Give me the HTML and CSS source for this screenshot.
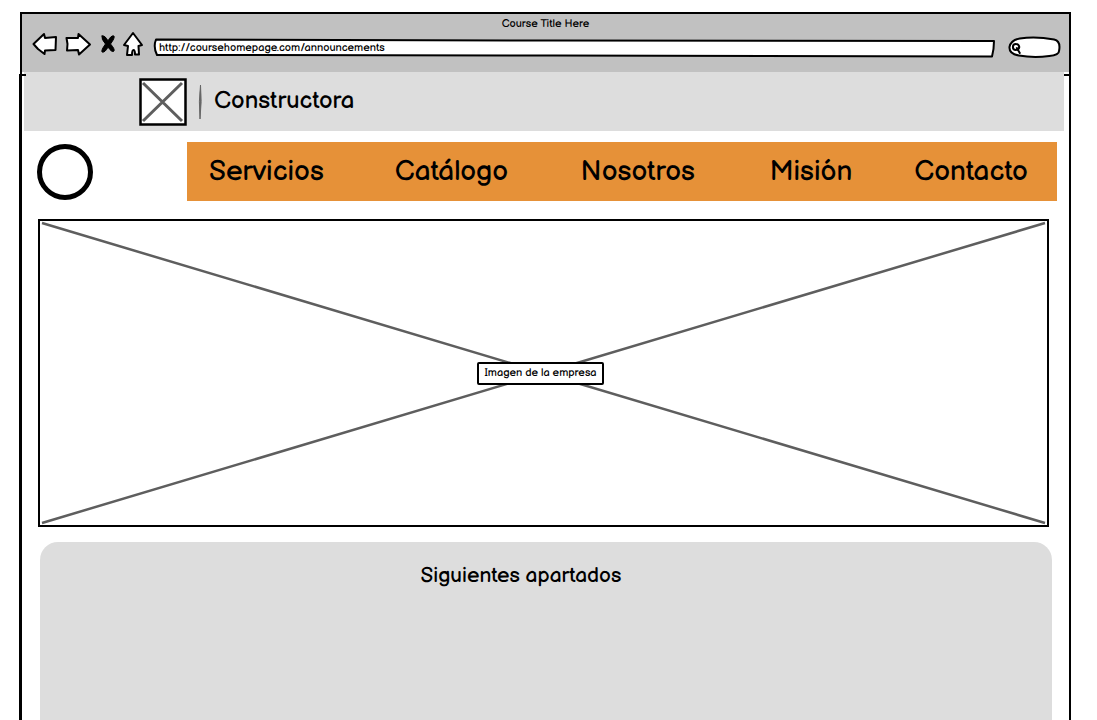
FILE: index.html
```html
<!DOCTYPE html>
<html lang="es">
<head>
<meta charset="utf-8">
<title>Constructora</title>
<link rel="stylesheet" href="styles.css">
</head>
<body>
<div class="browser">
  <div class="chrome">
    <div class="chrome-title">Course Title Here</div>
    <div class="toolbar">
      <button class="tool tool-back" aria-label="Back"><svg width="26" height="24" viewBox="0 0 26 24"><path d="M1.500 11 12 1 13 5 24 4 23.500 17 13 17.500 12.500 21 6 16Z"/></svg></button>
      <button class="tool tool-forward" aria-label="Forward"><svg width="26" height="24" viewBox="0 0 26 24"><path d="M1.500 5 13 5 13.500 1 25 11.500 14 21.500 13 17 2 17.500 2.500 11Z"/></svg></button>
      <button class="tool tool-stop" aria-label="Stop"><svg width="16" height="20" viewBox="0 0 16 20"><path class="solid" d="M2 1Q5 0 8 6Q11 0 14 1Q15 3 10.500 9Q15 14 14 16Q12 18 8 12Q5 18 2 17Q1 15 5.500 9Q1 4 2 1Z"/></svg></button>
      <button class="tool tool-home" aria-label="Home"><svg width="20" height="26" viewBox="0 0 20 26"><path d="M10 1 19 13 15.500 14 16 22.500 12 22.500Q12 18 10.500 18T9 23L4 23 5 14 1 13Z"/></svg></button>
      <div class="address">
        <svg class="outline" viewBox="0 0 842 20" preserveAspectRatio="none" aria-hidden="true"><path d="M2 1.500 400 2.500 841 3Q841 11 839 18.500L400 17.500 3 17Q-1 9 2 1.500Z"/></svg>
        <input class="address-input" type="text" aria-label="Address" value="http://coursehomepage.com/announcements">
      </div>
      <div class="search">
        <svg class="outline" viewBox="0 0 54 22" preserveAspectRatio="none" aria-hidden="true"><path d="M12 2.500Q28 0 47 3.500Q54 5 52 15Q52 19 42 20Q26 22 11 19.500Q1 18 1.500 11Q3 4 12 2.500Z"/><path class="lens" d="M5 11Q5 8 8 8T11.500 11Q11 14 8 14T5 11M9 12 12 17"/></svg>
        <input class="search-input" type="search" aria-label="Search">
      </div>
    </div>
  </div>
  <header class="brand">
    <svg class="brand-logo" width="48" height="48" viewBox="0 0 48 48" aria-hidden="true"><path class="box" d="M1.500 1.500 46.500 1.500 46.500 46.500 1.500 46.500Z"/><path class="cross" d="M4 5 43 43M43 5 4 43"/></svg>
    <svg class="brand-rule" width="4" height="36" viewBox="0 0 4 36" aria-hidden="true"><path d="M2.500 1Q.5 17 2 35Q4 17 2.500 1Z"/></svg>
    <h1 class="brand-name">Constructora</h1>
  </header>
  <div class="menu-row">
    <div class="menu-mark"></div>
    <nav class="menu">
      <a href="#servicios">Servicios</a>
      <a href="#catalogo">Catálogo</a>
      <a href="#nosotros">Nosotros</a>
      <a href="#mision">Misión</a>
      <a href="#contacto">Contacto</a>
    </nav>
  </div>
  <div class="hero">
    <svg class="hero-cross" viewBox="0 0 1006 302" preserveAspectRatio="none" aria-hidden="true"><path d="M1 1 1005 301M1005 1 1 301"/></svg>
    <div class="hero-label">Imagen de la empresa</div>
  </div>
  <section class="next">
    <h2 class="next-title">Siguientes apartados</h2>
  </section>
</div>
</body>
</html>
```
FILE: styles.css
```css
* { box-sizing: border-box; }

body {
  margin: 0;
  background: #fff;
  color: #000;
  font-family: "Balsamiq Sans", Inter, sans-serif;
  font-weight: 400;
  text-rendering: geometricPrecision;
}

h1, h2 { margin: 0; font-weight: 400; }

svg { display: block; overflow: visible; }

.browser {
  position: relative;
  display: flex;
  flex-direction: column;
  height: calc(100vh - 12px);
  margin: 12px 26px 0 20px;
  border: 2px solid #000;
  border-bottom: 0;
}

/* hand-drawn jogs where the side strokes meet the chrome */
.browser::before {
  content: "";
  position: absolute;
  left: -3px;
  top: 60px;
  bottom: 0;
  width: 4px;
  border-left: 3px solid #000;
  border-top: 2px solid #000;
}

.browser::after {
  content: "";
  position: absolute;
  right: 0;
  top: 60px;
  width: 5px;
  height: 2px;
  background: #000;
}

.chrome {
  height: 58px;
  background: #c1c1c1;
}

.chrome-title {
  padding-top: 4px;
  font-size: 11px;
  line-height: 14px;
  text-align: center;
}

.toolbar {
  display: flex;
  align-items: center;
  height: 26px;
  padding: 0 8px 0 10px;
}

.tool {
  flex: none;
  padding: 0;
  border: 0;
  background: none;
}

.tool-forward { margin-left: 7px; }
.tool-stop { margin-left: 9px; }
.tool-home { margin-left: 7px; }

.tool path, .outline path {
  fill: #fff;
  stroke: #000;
  stroke-width: 2;
  stroke-linejoin: round;
  stroke-linecap: round;
  vector-effect: non-scaling-stroke;
}

.tool .solid { fill: #000; stroke-width: 1; }
.outline .lens { fill: none; }

.address {
  position: relative;
  flex: 1;
  height: 20px;
  margin: 5px 13px 0 11px;
}

.search {
  position: relative;
  flex: none;
  width: 53px;
  height: 22px;
  margin-top: 4px;
}

.outline {
  position: absolute;
  inset: 0;
  width: 100%;
  height: 100%;
}

.address-input, .search-input {
  position: relative;
  display: block;
  width: 100%;
  height: 100%;
  padding: 1px 5px 0;
  border: 0;
  outline: 0;
  background: none;
  color: #000;
  font: inherit;
  font-size: 11px;
  text-rendering: inherit;
}

.search-input { padding-left: 16px; }

.brand {
  display: flex;
  align-items: center;
  height: 59px;
  margin: 0 5px 0 2px;
  padding-left: 115px;
  background: #ddd;
}

.brand-logo .box { fill: #fff; stroke: #000; stroke-width: 2.5; }
.brand-logo .cross { fill: none; stroke: #5e5e5e; stroke-width: 3; }
.brand-rule { margin-left: 11px; }
.brand-rule path { fill: #666; stroke: #666; stroke-width: 1; }

.brand-name {
  margin-left: 12px;
  font-size: 24px;
  line-height: 28px;
}

.menu-row {
  display: flex;
  align-items: center;
  margin: 11px 12px 0 15px;
}

.menu-mark {
  width: 56px;
  height: 56px;
  border: 5px solid #000;
  border-radius: 50%;
}

.menu {
  display: grid;
  grid-template-columns: 186fr 186fr 189fr 145fr 113fr;
  align-items: center;
  flex: 1;
  height: 59px;
  margin-left: 94px;
  padding: 2px 29px 0 22px;
  background: #e69138;
}

.menu a {
  color: #000;
  font-size: 28px;
  line-height: 32px;
  text-decoration: none;
}

.hero {
  display: grid;
  place-items: center;
  height: 308px;
  margin: 18px 20px 0 16px;
  padding: 1px;
  border: 2px solid #000;
}

.hero-cross, .hero-label { grid-area: 1 / 1; }

.hero-cross { width: 100%; height: 302px; }

.hero-cross path {
  fill: none;
  stroke: #5e5e5e;
  stroke-width: 2.5;
  vector-effect: non-scaling-stroke;
}

.hero-label {
  margin-right: 6px;
  padding: 2px 5px;
  border: 2px solid #000;
  border-radius: 2px;
  background: #fff;
  font-size: 11px;
  line-height: 15px;
}

.next {
  flex: 1;
  margin: 15px 17px 0 18px;
  padding-top: 21px;
  border-radius: 18px 18px 0 0;
  background: #ddd;
}

.next-title {
  margin-right: 50px;
  font-size: 21px;
  line-height: 28px;
  text-align: center;
}
```
